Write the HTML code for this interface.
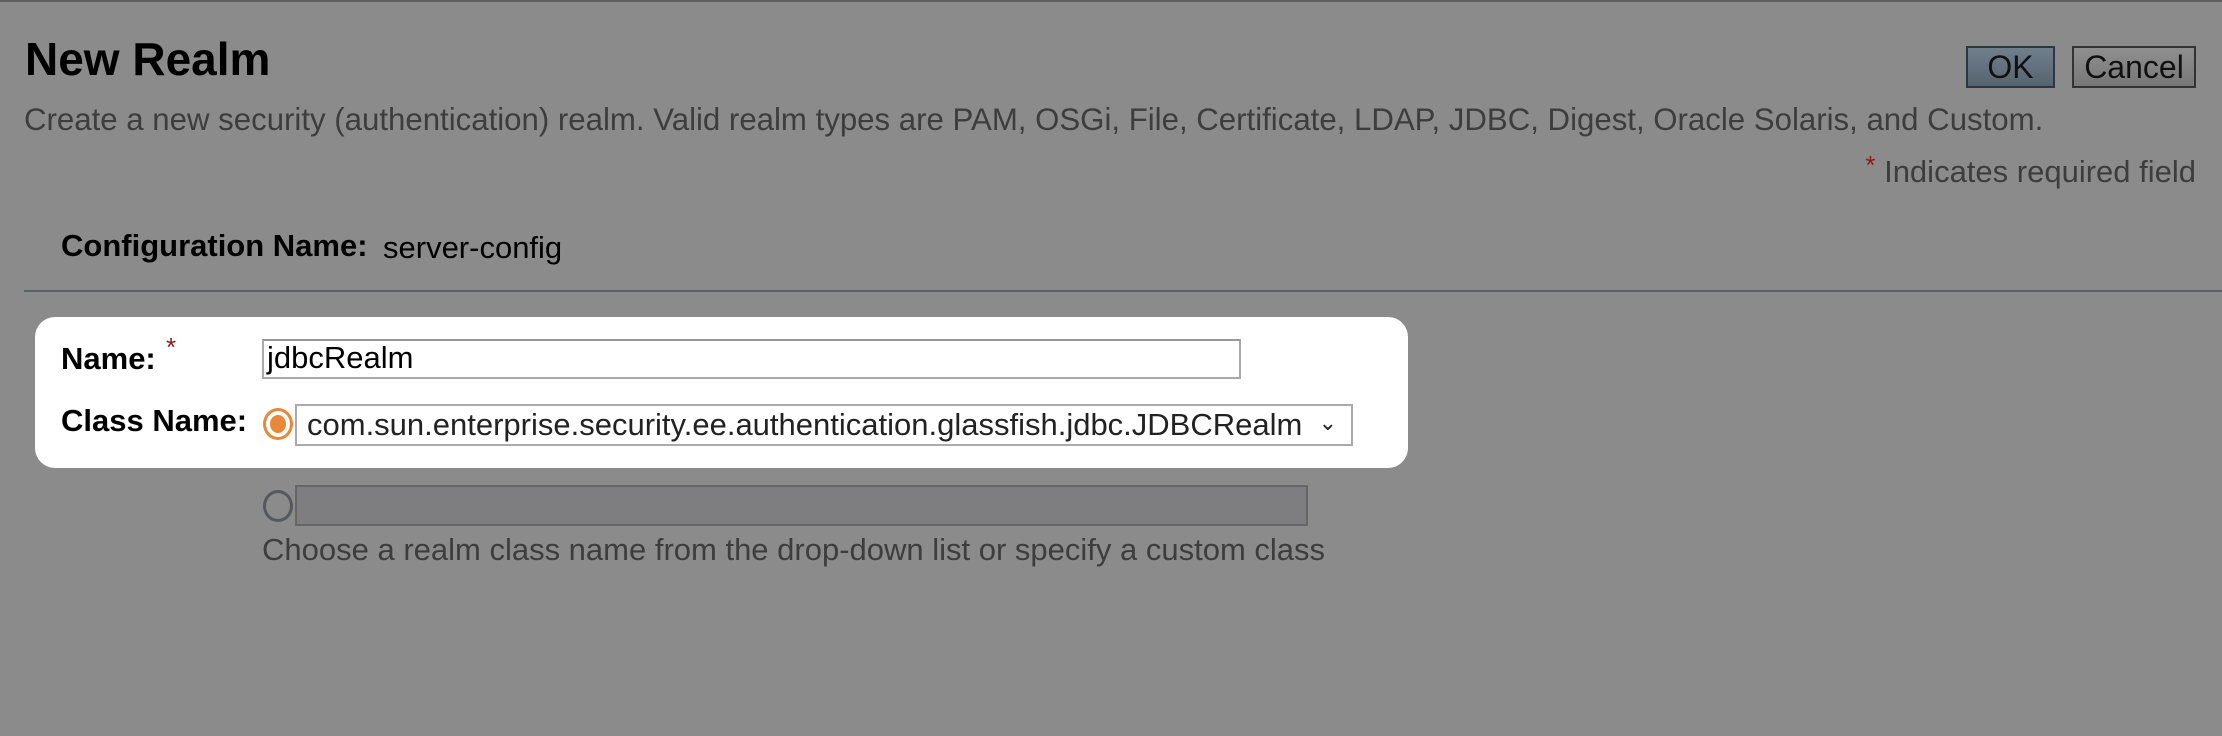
<!DOCTYPE html>
<html><head><meta charset="utf-8"><style>
*{margin:0;padding:0;box-sizing:border-box}
body{width:2222px;height:736px;background:#8b8b8b;font-family:"Liberation Sans",Arial,sans-serif;position:relative;overflow:hidden;border-top:2px solid #5e5e5e}
.a{position:absolute;white-space:nowrap}
.btn{position:absolute;top:44px;height:42px;border:2px solid #2f3640;font-size:32px;line-height:38px;text-align:center;color:#111}
.star{color:#8b1a1a;font-size:26px}
</style></head><body>
<div class="a" style="left:25px;top:30px;font-size:46px;font-weight:bold;color:#000">New Realm</div>
<div class="btn" style="left:1966px;width:89px;background:linear-gradient(#6f7f8c,#56646f)">OK</div>
<div class="btn" style="left:2072px;width:124px;border-color:#333;background:linear-gradient(#8f8f8f,#777)">Cancel</div>
<div class="a" style="left:24px;top:100px;font-size:31.2px;color:#3d3d3d">Create a new security (authentication) realm. Valid realm types are PAM, OSGi, File, Certificate, LDAP, JDBC, Digest, Oracle Solaris, and Custom.</div>
<div class="a" style="right:26px;top:152px;font-size:31px;color:#3d3d3d"><span class="star" style="position:relative;top:-8px">*</span> Indicates required field</div>
<div class="a" style="left:61px;top:226px;font-size:31px;font-weight:bold;color:#000">Configuration Name:</div>
<div class="a" style="left:383px;top:228px;font-size:31px;color:#000">server-config</div>
<div class="a" style="left:24px;top:288px;width:2198px;height:2px;background:#5b6066"></div>
<div class="a" style="left:35px;top:315px;width:1373px;height:151px;background:#fff;border-radius:20px"></div>
<div class="a" style="left:61px;top:339px;font-size:31px;font-weight:bold;color:#000">Name:</div>
<div class="a" style="left:166px;top:330px" ><span class="star">*</span></div>
<div class="a" style="left:262px;top:337px;width:979px;height:40px;border:2px solid #aaa;border-top-color:#999;font-size:31px;line-height:34px;padding-left:3px;color:#000">jdbcRealm</div>
<div class="a" style="left:61px;top:401px;font-size:31px;font-weight:bold;color:#000">Class Name:</div>
<div class="a" style="left:263px;top:406px;width:30px;height:32px;border-radius:50%;border:3px solid #e8883a;background:#fff"><div style="position:absolute;left:4px;top:4px;width:16px;height:18px;border-radius:50%;background:#e8883a"></div></div>
<div class="a" style="left:295px;top:402px;width:1058px;height:42px;border:2px solid #aaa;background:#fff;font-size:31px;line-height:38px;padding-left:10px;color:#222">com.sun.enterprise.security.ee.authentication.glassfish.jdbc.JDBCRealm<span style="position:absolute;right:14px;top:-2px;font-size:22px">&#8964;</span></div>
<div class="a" style="left:263px;top:488px;width:30px;height:32px;border-radius:50%;border:3px solid #55585c"></div>
<div class="a" style="left:295px;top:483px;width:1013px;height:41px;border:2px solid #666;background:#7e7e80"></div>
<div class="a" style="left:262px;top:530px;font-size:31px;color:#3d3d3d">Choose a realm class name from the drop-down list or specify a custom class</div>
</body></html>
